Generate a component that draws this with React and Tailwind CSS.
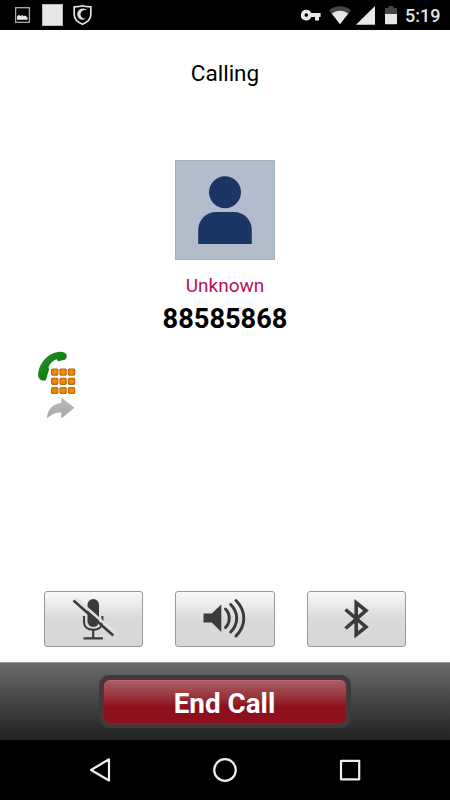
function StatusBar() {
  return (
    <header className="flex h-[30px] items-center justify-between bg-black">
      <div className="flex h-full items-center">
        <svg className="ml-[15px] h-[30px] w-[16px]" viewBox="15 0 16 30">
          <rect x="15.600" y="7.700" width="13.800" height="14.600" fill="none" stroke="#aaa" strokeWidth="1.300" />
          <path d="M17 19.700v-3.200l1.800-1.700 1.700 1.300 1.800-1 1.400 1.200 1.600-.8 2.200 1.900v2.300z" fill="#e8e8e8" />
        </svg>
        <div className="ml-[10.500px] size-[21.500px] border border-[#bbb] bg-[#e7e7e7]" />
        <svg className="ml-[9px] h-[30px] w-[21px]" viewBox="72 0 21 30">
          <path d="M82.500 5.700c2.600.9 5.300 1.100 8.300 1.100v7.800c0 4.600-3.200 7.600-8.300 9.700-5.100-2.100-8.300-5.100-8.300-9.700V6.800c3 0 5.700-.2 8.300-1.100z" fill="none" stroke="#e2e2e2" strokeWidth="1.700" />
          <path d="M87.300 10.800A5.600 5.600 0 1 0 86.500 18.300A4.300 4.300 0 1 1 87.300 10.800z" fill="#ddd" />
        </svg>
      </div>
      <div className="flex h-full items-center">
        <svg className="h-[30px] w-[105px]" viewBox="300 0 105 30">
          <path fillRule="evenodd" d="M306.300 9.700a5.400 5.400 0 0 1 5 3.400h9.300v4H319v3.300h-4v-3.300h-3.700a5.400 5.400 0 1 1-5-7.400zM306.300 13.300a1.800 1.800 0 1 0 0 3.600 1.800 1.800 0 0 0 0-3.600z" fill="#e8e8e8" />
          <path d="M340 24.200 329 10.200c6-5.200 16-5.200 22 0z" fill="#454545" />
          <path d="M340 24.200 331.800 13.600c4.800-3.900 11.600-3.900 16.400 0z" fill="#e8e8e8" />
          <path d="M375 6v18.700h-19z" fill="#e8e8e8" />
          <path d="M385 8h3.500V6h5v2h3.500v6h-12z" fill="#454545" />
          <path d="M385 14h12v9.500q0 .7-.7.700h-10.600q-.7 0-.7-.7z" fill="#e8e8e8" />
        </svg>
        <span className="mt-[2px] mr-[10.500px] w-[34.500px] text-right text-[18px] leading-[30px] font-medium whitespace-nowrap text-[#e4e4e4]">5:19</span>
      </div>
    </header>
  );
}

function Avatar() {
  return (
    <svg className="mt-[72px] size-[100px] border border-[#a0afc0] bg-[#b2bccb]" viewBox="1 1 98 98">
      <circle cx="50" cy="32.200" r="16" fill="#1b3664" />
      <path d="M23.200 84V70c0-10 7.800-18 18-18h17.600c10.200 0 18 8 18 18v14z" fill="#1b3664" />
    </svg>
  );
}

function TransferIcon() {
  const cells = [0, 1, 2, 3, 4, 5, 6, 7, 8];
  return (
    <svg className="mt-[16px] ml-[36px] h-[70px] w-[42px]" viewBox="36 350 42 70">
      <defs>
        <linearGradient id="handset" x1="0" y1="0" x2="1" y2="1">
          <stop offset="0" stopColor="#2c9a34" />
          <stop offset="0.500" stopColor="#118015" />
          <stop offset="1" stopColor="#076e0b" />
        </linearGradient>
        <radialGradient id="key" cx="0.500" cy="0.500" r="0.700">
          <stop offset="0" stopColor="#f99206" />
          <stop offset="0.500" stopColor="#e88005" />
          <stop offset="1" stopColor="#6b3a1a" />
        </radialGradient>
        <linearGradient id="forward" x1="0" y1="0" x2="0" y2="1">
          <stop offset="0" stopColor="#bcbcbc" />
          <stop offset="1" stopColor="#a8a8a8" />
        </linearGradient>
      </defs>
      <path d="M38.200 376.500C37.500 366 46 353.500 58 352C61 351.500 64.500 352 66.200 354.300C67.200 356 66.700 358.500 65 359.800C62.800 360 60.500 360.800 58.500 361.300C57.300 361 57.500 359.300 56.500 359.200C53.500 360 50.200 363 48.500 367C48.800 368.500 49.200 369.500 48.600 371C47.500 374 46.800 377.500 45.800 380.300C43.500 381.200 39.200 380.300 38.200 376.500z" fill="url(#handset)" />
      {cells.map((cell) => (
        <rect key={cell} x={51 + (cell % 3) * 8.400} y={368.500 + Math.floor(cell / 3) * 9.200} width="7.400" height="7.200" rx="1.800" fill="url(#key)" />
      ))}
      <path d="M61.500 398.200 74.200 407.800 61.500 418v-5.600c-5-.6-9.500 1.200-14.300 5.600.2-7.500 5.500-14.300 14.300-14.700z" fill="url(#forward)" stroke="#a8a8a8" strokeWidth="0.500" />
    </svg>
  );
}

function CallOption({ label, children }) {
  return (
    <button aria-label={label} className="h-[56px] w-[99.500px] rounded-[3px] border border-[#999] bg-linear-to-b from-[#f9f9f9] from-0% via-[#dadada] via-50% to-[#d7d7d7]">
      <svg className="h-[54px] w-[97.500px]" viewBox="1 1 97.5 54" fill="none" stroke="#3b3b3b">
        {children}
      </svg>
    </button>
  );
}

function CallOptions() {
  return (
    <div className="mb-[15px] flex justify-center gap-[32px]">
      <CallOption label="Mute">
        <rect x="43.500" y="8" width="11.500" height="28" rx="5.700" fill="#3b3b3b" stroke="none" />
        <path d="M40 25v6c0 4.800 3.500 7.700 9.200 7.700s9.200-2.900 9.200-7.700v-6" strokeWidth="2" />
        <path d="M49.200 38.500v8M39.500 47.300h19.500" strokeWidth="2.200" />
        <path d="M31.500 7 70.700 41.500" stroke="#e2e2e2" strokeWidth="2.500" />
        <path d="M29.500 9.500 69.300 44.500" strokeWidth="2.500" />
      </CallOption>
      <CallOption label="Speaker">
        <path d="M28.500 22.500h8.300L46.300 13.500v27.500L36.800 31.500h-8.300z" fill="#3b3b3b" stroke="none" />
        <path d="M50.500 18c5 5 5 13.500 0 18.500M55.700 13.500c8 8 8 19.500 0 27.500M61 9.500c10.400 10.500 10.400 25 0 35.500" strokeWidth="3" strokeLinecap="round" />
      </CallOption>
      <CallOption label="Bluetooth">
        <path d="M38.500 18.500 59 36 49.200 43.800V11.800L59 19.500 38.500 37.500" strokeWidth="3.600" />
      </CallOption>
    </div>
  );
}

function EndCallBar() {
  return (
    <div className="flex h-[78px] justify-center border-t border-[#999] bg-linear-to-b from-[#6b6b6b] to-[#222] pt-[12px]">
      <button className="ml-[-1px] h-[53px] w-[252px] rounded-[10px] border-3 border-[#3b3b3b] bg-[#523437] p-[2px]">
        <span className="flex h-full items-center justify-center rounded-[6px] border-t border-[#b76b75] bg-linear-to-b from-[#a95b66] from-0% via-[#8d101c] via-60% to-[#8e0f1b] pt-[4px] text-[27.800px] leading-none font-bold text-white">
          End Call
        </span>
      </button>
    </div>
  );
}

function NavigationBar() {
  return (
    <nav className="h-[60px] bg-black">
      <svg className="h-[60px] w-[450px]" viewBox="0 740 450 60" fill="none" stroke="#eee" strokeWidth="2.200" strokeLinejoin="round">
        <path d="M109 759.300v21.200L91 770z" />
        <circle cx="225" cy="770" r="10.800" />
        <rect x="341" y="760.800" width="18.200" height="18.500" />
      </svg>
    </nav>
  );
}

export default function App() {
  return (
    <div className="flex h-[800px] w-[450px] flex-col overflow-hidden bg-white font-[Roboto,sans-serif]">
      <StatusBar />
      <main className="flex flex-1 flex-col">
        <div className="flex flex-col items-center">
          <h1 className="mt-[28px] text-[22.500px] leading-[30px] text-black">Calling</h1>
          <Avatar />
          <p className="mt-[14px] text-[19px] leading-[24px] text-[#b2125d]">Unknown</p>
          <p className="mt-[6px] text-[27.200px] leading-[30px] font-bold text-black">88585868</p>
        </div>
        <TransferIcon />
        <div className="flex-1" />
        <CallOptions />
      </main>
      <EndCallBar />
      <NavigationBar />
    </div>
  );
}
